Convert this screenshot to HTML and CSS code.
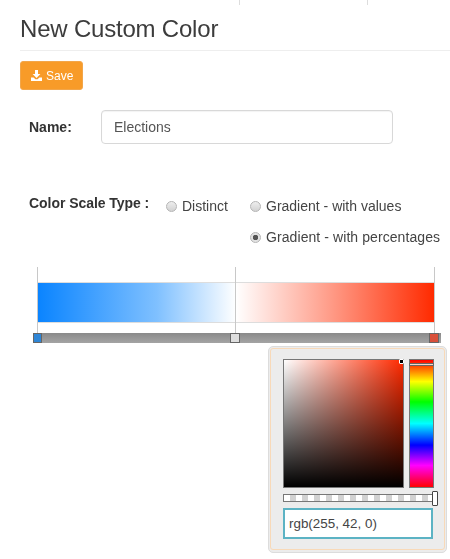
FILE: index.html
```html
<!DOCTYPE html>
<html lang="en">
<head>
<meta charset="utf-8">
<title>New Custom Color</title>
<link rel="stylesheet" href="styles.css">
</head>
<body>
<div class="tabs-edge"><span class="tab-line"></span><span class="tab-line"></span></div>
<h1 class="title">New Custom Color</h1>
<button class="save-btn" type="button">
  <svg class="save-icon" viewBox="0 0 11 11" aria-hidden="true"><path d="M4 0h3v4h2.4L5.5 8 1.6 4H4z"/><path d="M0 7.6h2.6L4.4 9.3h2.2l1.8-1.7H11V11H0z"/></svg>
  Save
</button>
<div class="name-row">
  <label class="label name-label">Name:</label>
  <div class="text-input">Elections</div>
</div>
<div class="scale-row">
  <div class="label scale-label">Color Scale Type :</div>
  <div class="radios">
    <div class="radio"><span class="dot"></span>Distinct</div>
    <div class="radio"><span class="dot"></span>Gradient - with values</div>
    <div class="radio third"><span class="dot on"></span>Gradient - with percentages</div>
  </div>
</div>
<div class="scale">
  <div class="bar"></div>
  <span class="tick t1"></span><span class="tick t2"></span><span class="tick t3"></span>
  <div class="track"></div>
  <span class="stop s1"></span><span class="stop s2"></span><span class="stop s3"></span>
</div>
<div class="picker">
  <div class="picker-inner">
    <div class="pick-top">
      <div class="sv"><div class="sv-dark"></div><span class="sv-handle"></span></div>
      <div class="hue"><span class="hue-handle"></span></div>
    </div>
    <div class="alpha"><span class="alpha-handle"></span></div>
    <div class="rgb-input">rgb(255, 42, 0)</div>
  </div>
</div>
</body>
</html>
```
FILE: styles.css
```css
html, body { margin: 0; padding: 0; }
body {
  width: 450px;
  height: 559px;
  overflow: hidden;
  background: #fff;
  font-family: "Liberation Sans", Arial, sans-serif;
  color: #333;
  position: relative;
  filter: blur(0.4px);
}
.tabs-edge { display: flex; height: 5px; padding-left: 239px; gap: 127px; }
.tab-line { width: 1px; background: #ddd; }
.title {
  margin: 11px 0 0 20px;
  height: 34px;
  font-size: 24px;
  line-height: 26px;
  font-weight: 400;
  color: #3c3c3c;
  letter-spacing: -0.2px;
  border-bottom: 1px solid #eee;
}
.save-btn {
  display: flex;
  align-items: center;
  gap: 4px;
  margin: 10px 0 0 20px;
  width: 63px;
  height: 29px;
  padding: 0 0 0 10px;
  background: #f89b28;
  border: 1px solid #f2a64a;
  border-radius: 3px;
  color: #fff;
  font: 12px "Liberation Sans", Arial, sans-serif;
}
.save-icon { width: 11px; height: 11px; fill: #fff; }
.name-row { display: flex; align-items: center; margin: 20px 0 0 29px; }
.label { font-size: 14px; font-weight: 700; color: #333; }
.name-label { width: 72px; }
.text-input {
  box-sizing: border-box;
  width: 292px;
  height: 34px;
  padding-left: 12px;
  line-height: 32px;
  font-size: 14px;
  color: #555;
  background: #fff;
  border: 1px solid #d8d8d8;
  border-radius: 4px;
  box-shadow: inset 0 1px 1px rgba(0,0,0,.05);
}
.scale-row { display: flex; margin: 50px 0 0 29px; }
.scale-label { width: 137px; line-height: 18px; letter-spacing: -0.05px; }
.radios { display: grid; grid-template-columns: 84px auto; row-gap: 13px; margin-top: 3px; }
.radio { display: flex; align-items: center; font-size: 14px; line-height: 18px; color: #444; white-space: nowrap; }
.radio.third { grid-column: 2; letter-spacing: 0.08px; }
.dot {
  box-sizing: border-box;
  width: 11px;
  height: 11px;
  margin-right: 5px;
  border-radius: 50%;
  border: 1px solid #b4b4b4;
  background: linear-gradient(#eee, #d2d2d2);
}
.dot.on { background: radial-gradient(circle, #555 0 2.5px, #e2e2e2 3px); }
.scale { position: relative; height: 78px; margin: 21px 0 0 33px; width: 408px; }
.bar {
  position: absolute;
  left: 5px;
  top: 15px;
  width: 397px;
  height: 41px;
  box-sizing: border-box;
  border: 1px solid #ddd;
  border-left: 0;
  background: linear-gradient(90deg, #0a84ff 0%, #7fc0ff 30%, #fff 50%, #ff9f8c 73%, #ff2a00 100%);
}
.tick { position: absolute; top: 0; width: 1px; height: 66px; background: #c8c8c8; }
.t1 { left: 4px; } .t2 { left: 202px; } .t3 { left: 401px; }
.track {
  position: absolute;
  left: 0;
  top: 66px;
  width: 408px;
  height: 10px;
  background: linear-gradient(#8a8a8a, #a4a4a4);
}
.stop {
  position: absolute;
  top: 66px;
  width: 8px;
  height: 8px;
  border: 1px solid #666;
}
.s1 { left: 0; width: 7px; background: #2f86d6; }
.s2 { left: 197px; background: #dedede; }
.s3 { left: 396px; background: #d9503a; }
.picker {
  position: absolute;
  left: 268px;
  top: 346px;
  width: 179px;
  height: 207px;
  box-sizing: border-box;
  padding: 1px;
  background: #ececec;
  border: 1px solid #dcdcdc;
  border-radius: 5px;
}
.picker-inner {
  box-sizing: border-box;
  height: 202px;
  padding: 10px 0 0 12px;
  border: 1px solid #f8d9b8;
  border-radius: 3px;
}
.pick-top { display: flex; gap: 5px; }
.sv {
  position: relative;
  width: 121px;
  height: 129px;
  box-sizing: border-box;
  border: 1px solid #777;
  background: linear-gradient(90deg, #fff, #ff2a00);
}
.sv-dark { height: 100%; background: linear-gradient(transparent, #000); }
.sv-handle { position: absolute; right: -1px; top: -1px; width: 3px; height: 3px; background: #000; border: 1px solid #fff; border-radius: 1px; }
.hue {
  position: relative;
  width: 25px;
  height: 129px;
  box-sizing: border-box;
  border: 1px solid #777;
  background: linear-gradient(#f00 0%, #ff0 17%, #0f0 33%, #0ff 50%, #00f 67%, #f0f 83%, #f00 100%);
}
.hue-handle { position: absolute; left: -1px; right: -1px; top: 3px; height: 1px; background: #f3d6c8; border: 1px solid #666; }
.alpha {
  position: relative;
  width: 150px;
  height: 8px;
  margin-top: 6px;
  box-sizing: border-box;
  border: 1px solid #777;
  background: repeating-linear-gradient(90deg, #fff 0 6px, #d2d2d2 6px 12px);
}
.alpha-handle { position: absolute; right: -6px; top: -4px; width: 4px; height: 13px; background: #fff; border: 1px solid #444; border-radius: 1px; }
.rgb-input {
  box-sizing: border-box;
  width: 150px;
  height: 31px;
  margin-top: 6px;
  padding-left: 4px;
  line-height: 27px;
  font-size: 13.4px;
  color: #444;
  background: #fff;
  border: 2px solid #5cb3c4;
}
```
